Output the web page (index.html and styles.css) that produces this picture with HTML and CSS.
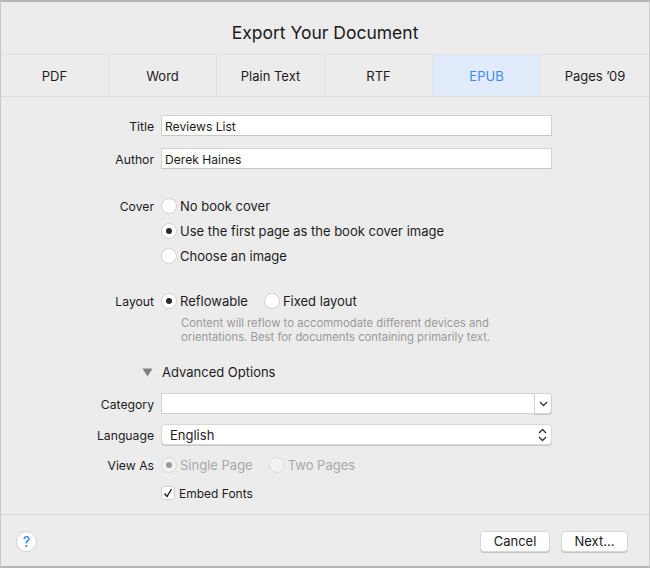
FILE: index.html
```html
<!DOCTYPE html>
<html lang="en">
<head>
<meta charset="utf-8">
<title>Export Your Document</title>
<link rel="stylesheet" href="styles.css">
</head>
<body>
<main class="window">
  <h1 class="title">Export Your Document</h1>
  <nav class="tabs">
    <div class="tab">PDF</div>
    <div class="tab">Word</div>
    <div class="tab">Plain Text</div>
    <div class="tab">RTF</div>
    <div class="tab active">EPUB</div>
    <div class="tab">Pages ’09</div>
  </nav>
  <section class="form">
    <div class="row row-title">
      <div class="label">Title</div>
      <div class="field">Reviews List</div>
    </div>
    <div class="row row-author">
      <div class="label">Author</div>
      <div class="field">Derek Haines</div>
    </div>
    <div class="row row-cover">
      <div class="label">Cover</div>
      <div class="option"><span class="radio"></span>No book cover</div>
    </div>
    <div class="row row-cover2">
      <div></div>
      <div class="option"><span class="radio on"></span>Use the first page as the book cover image</div>
    </div>
    <div class="row row-cover3">
      <div></div>
      <div class="option"><span class="radio"></span>Choose an image</div>
    </div>
    <div class="row row-layout">
      <div class="label">Layout</div>
      <div class="options">
        <div class="option"><span class="radio on"></span>Reflowable</div>
        <div class="option"><span class="radio"></span>Fixed layout</div>
      </div>
    </div>
    <div class="row row-hint">
      <div></div>
      <p class="hint">Content will reflow to accommodate different devices and<br>orientations. Best for documents containing primarily text.</p>
    </div>
    <div class="advanced">
      <svg class="triangle" width="11" height="9" viewBox="0 0 11 9"><path d="M0.5 0.5H10.5L5.5 8.5Z" fill="#808080"/></svg>
      <span>Advanced Options</span>
    </div>
    <div class="row row-category">
      <div class="label">Category</div>
      <div class="combo">
        <div class="combo-input"></div>
        <div class="combo-btn">
          <svg width="9" height="6" viewBox="0 0 9 6"><path d="M1 1L4.5 4.5L8 1" fill="none" stroke="#333" stroke-width="1.3"/></svg>
        </div>
      </div>
    </div>
    <div class="row row-language">
      <div class="label">Language</div>
      <div class="select">
        <span>English</span>
        <svg width="9" height="14" viewBox="0 0 9 14"><path d="M1 5L4.5 1.5L8 5M1 9L4.5 12.5L8 9" fill="none" stroke="#333" stroke-width="1.3"/></svg>
      </div>
    </div>
    <div class="row row-view">
      <div class="label">View As</div>
      <div class="options disabled">
        <div class="option"><span class="radio on"></span>Single Page</div>
        <div class="option"><span class="radio"></span>Two Pages</div>
      </div>
    </div>
    <div class="row row-embed">
      <div></div>
      <div class="option check-option">
        <span class="checkbox"><svg width="10" height="10" viewBox="0 0 10 10"><path d="M1.5 5.5L4 8.5L8.5 1" fill="none" stroke="#222" stroke-width="1.4"/></svg></span>Embed Fonts
      </div>
    </div>
  </section>
  <footer class="footer">
    <div class="help">?</div>
    <div class="buttons">
      <div class="button">Cancel</div>
      <div class="button">Next...</div>
    </div>
  </footer>
</main>
</body>
</html>
```
FILE: styles.css
```css
* { box-sizing: border-box; }
html, body { margin: 0; padding: 0; }
body {
  width: 650px;
  height: 568px;
  background: #ececec;
  font-family: Inter, "Liberation Sans", sans-serif;
  font-size: 13px;
  color: #1c1c1c;
  overflow: hidden;
}
.window {
  width: 650px;
  height: 568px;
  display: flex;
  flex-direction: column;
  background: #ececec;
  border-top: 2px solid #b5b5b5;
  border-left: 1px solid #c8c8c8;
  border-right: 1px solid #c8c8c8;
  border-bottom: 2px solid #b5b5b5;
}
.title {
  margin: 0;
  height: 52px;
  line-height: 61px;
  text-align: center;
  font-size: 17.5px;
  font-weight: 400;
  color: #1a1a1a;
}
.tabs {
  display: grid;
  grid-template-columns: 108px 108px 108px 108px 108px 108px;
  height: 43px;
  border-top: 1px solid #e0e0e0;
  border-bottom: 1px solid #dcdcdc;
}
.tab {
  display: flex;
  align-items: center;
  justify-content: center;
  padding-top: 1px;
  border-right: 1px solid #e2e2e2;
}
.tab:last-child { border-right: 0; }
.tab.active { background: #e1ebfb; color: #3a8cf6; }
.form {
  flex: 1;
  display: flex;
  flex-direction: column;
  padding-top: 18px;
}
.row {
  display: grid;
  grid-template-columns: 153px 391px;
  column-gap: 7px;
  align-items: center;
}
.label { text-align: right; font-size: 12.2px; line-height: 18px; padding-top: 2px; }
.field {
  height: 21px;
  line-height: 21px;
  padding-left: 3px;
  font-size: 12.1px;
  background: #fff;
  border: 1px solid #d2d2d2;
  border-bottom-color: #c6c6c6;
}
.row-author { margin-top: 12px; }
.row-cover { margin-top: 27px; }
.row-cover2 { margin-top: 5px; }
.row-cover3 { margin-top: 5px; }
.row-layout { margin-top: 25px; }
.row-hint { margin-top: 5px; }
.option { display: flex; align-items: center; gap: 3px; height: 20px; }
.options { display: flex; gap: 16px; }
.radio {
  flex: none;
  position: relative;
  width: 16px;
  height: 16px;
  border-radius: 50%;
  background: #fff;
  border: 1px solid #d2d2d2;
}
.radio.on::after {
  content: "";
  position: absolute;
  left: 4px;
  top: 4px;
  width: 6px;
  height: 6px;
  border-radius: 50%;
  background: #2a2a2a;
}
.hint {
  margin: 0 0 0 20px;
  font-size: 11.3px;
  line-height: 14px;
  color: #9a9a9a;
}
.advanced {
  margin-top: 18px;
  margin-left: 141px;
  display: flex;
  align-items: center;
  gap: 9px;
  height: 20px;
}
.row-category { margin-top: 11px; }
.combo { display: flex; height: 21px; }
.combo-input {
  flex: 1;
  background: #fff;
  border: 1px solid #d2d2d2;
  border-right: 0;
}
.combo-btn {
  width: 18px;
  display: flex;
  align-items: center;
  justify-content: center;
  background: #fff;
  border: 1px solid #d2d2d2;
  border-radius: 0 4px 4px 0;
  box-shadow: 0 1px 0 #c8c8c8;
}
.row-language { margin-top: 10px; }
.select {
  height: 21px;
  display: flex;
  align-items: center;
  justify-content: space-between;
  padding: 0 4px 0 8px;
  background: #fff;
  border: 1px solid #d8d8d8;
  border-radius: 4px;
  box-shadow: 0 1px 0 #c8c8c8;
}
.row-view { margin-top: 10px; }
.disabled { color: #a9a9a9; }
.disabled .radio { background: #f1f1f1; border-color: #dcdcdc; }
.disabled .radio.on::after { background: #9a9a9a; }
.row-embed { margin-top: 8px; }
.check-option { font-size: 12px; gap: 4px; }
.checkbox {
  width: 14px;
  height: 14px;
  display: flex;
  align-items: center;
  justify-content: center;
  background: #fff;
  border: 1px solid #d2d2d2;
  border-radius: 3px;
}
.footer {
  flex: none;
  height: 52px;
  display: flex;
  align-items: center;
  justify-content: space-between;
  padding: 2px 21px 0 15px;
  border-top: 1px solid #d8d8d8;
}
.help {
  width: 21px;
  height: 21px;
  display: flex;
  align-items: center;
  justify-content: center;
  border-radius: 50%;
  background: #fff;
  border: 1px solid #d2d2d2;
  color: #3a8cf6;
  font-size: 14px;
  font-weight: 500;
}
.buttons { display: flex; gap: 11px; }
.button {
  width: 70px;
  height: 21px;
  display: flex;
  align-items: center;
  justify-content: center;
  padding-bottom: 1px;
  background: #fff;
  border: 1px solid #d8d8d8;
  border-radius: 4px;
  box-shadow: 0 1px 0 #c4c4c4;
}
.button + .button { width: 67px; }
```
